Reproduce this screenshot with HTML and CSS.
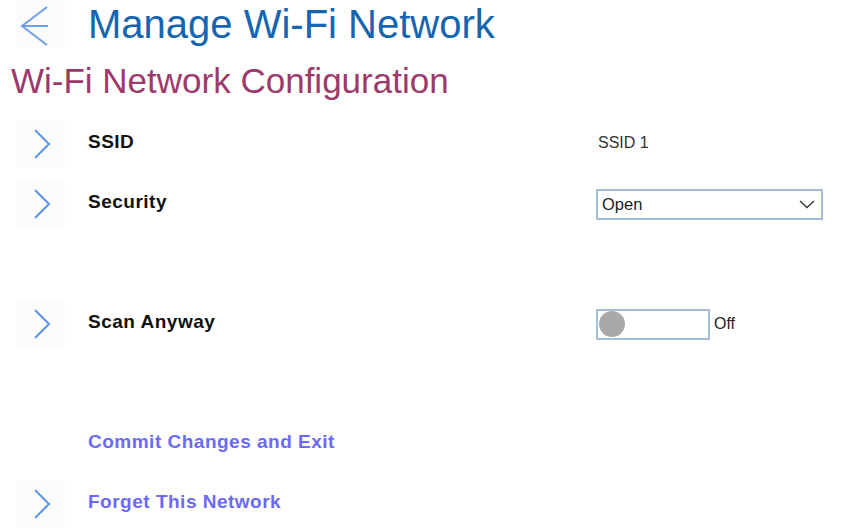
FILE: index.html
```html
<!DOCTYPE html>
<html>
<head>
<meta charset="utf-8">
<link rel="stylesheet" href="styles.css">
</head>
<body>
<header class="header">
  <div class="iconbox">
    <svg width="48" height="48" viewBox="0 0 48 48"><path d="M30 7 L5 26 L30 45 M5 26 H31" fill="none" stroke="#6f9fe6" stroke-width="2"/></svg>
  </div>
  <h1 class="title">Manage Wi-Fi Network</h1>
</header>
<h2 class="subtitle">Wi-Fi Network Configuration</h2>
<div class="list">
  <div class="row">
    <div class="iconbox"><svg width="48" height="48" viewBox="0 0 48 48"><path d="M18 10 L32 24 L18 38" fill="none" stroke="#5e93ea" stroke-width="2"/></svg></div>
    <div class="label">SSID</div>
    <div class="value">SSID 1</div>
  </div>
  <div class="row">
    <div class="iconbox"><svg width="48" height="48" viewBox="0 0 48 48"><path d="M18 10 L32 24 L18 38" fill="none" stroke="#5e93ea" stroke-width="2"/></svg></div>
    <div class="label">Security</div>
    <div class="select"><span>Open</span><svg width="16" height="10" viewBox="0 0 16 10"><path d="M1 2 L8 8.5 L15 2" fill="none" stroke="#333" stroke-width="1.3"/></svg></div>
  </div>
  <div class="row"></div>
  <div class="row">
    <div class="iconbox"><svg width="48" height="48" viewBox="0 0 48 48"><path d="M18 10 L32 24 L18 38" fill="none" stroke="#5e93ea" stroke-width="2"/></svg></div>
    <div class="label">Scan Anyway</div>
    <div class="toggle-wrap"><div class="toggle"><div class="knob"></div></div><span class="toggle-text">Off</span></div>
  </div>
  <div class="row"></div>
  <div class="row">
    <div class="spacer"></div>
    <div class="label link">Commit Changes and Exit</div>
  </div>
  <div class="row">
    <div class="iconbox"><svg width="48" height="48" viewBox="0 0 48 48"><path d="M18 10 L32 24 L18 38" fill="none" stroke="#5e93ea" stroke-width="2"/></svg></div>
    <div class="label link">Forget This Network</div>
  </div>
</div>
</body>
</html>
```

FILE: styles.css
```css
html, body {
  margin: 0;
  padding: 0;
  background: #ffffff;
  font-family: "Liberation Sans", Arial, sans-serif;
}
.header {
  display: flex;
  align-items: center;
  height: 48px;
  padding-left: 17px;
}
.iconbox {
  width: 48px;
  height: 48px;
  background: #fcfcfc;
  flex: none;
}
.iconbox svg { display: block; }
.title {
  margin: 0 0 0 23px;
  font-size: 40px;
  font-weight: normal;
  color: #1565b0;
  line-height: 46px;
}
.subtitle {
  margin: 13px 0 0 11px;
  font-size: 35px;
  font-weight: normal;
  color: #9c3a6b;
  line-height: 39px;
}
.list {
  margin-top: 14px;
  padding-left: 17px;
}
.row {
  display: flex;
  align-items: center;
  height: 60px;
}
.spacer {
  width: 48px;
  flex: none;
}
.label {
  margin-left: 23px;
  width: 508px;
  flex: none;
  font-size: 19px;
  font-weight: bold;
  letter-spacing: 0.5px;
  color: #111;
  padding-bottom: 5px;
}
.label.link {
  color: #6a6af7;
  width: auto;
}
.value {
  font-size: 16px;
  color: #333;
  padding-left: 2px;
  padding-bottom: 3px;
}
.select {
  box-sizing: border-box;
  width: 227px;
  height: 31px;
  border: 2px solid #a4bdd8;
  display: flex;
  align-items: center;
  justify-content: space-between;
  padding: 0 6px 0 4px;
  font-size: 16.5px;
  color: #222;
}
.toggle-wrap {
  display: flex;
  align-items: center;
}
.toggle {
  box-sizing: border-box;
  width: 114px;
  height: 31px;
  border: 2px solid #a4bdd8;
  display: flex;
  align-items: center;
  padding-left: 1px;
}
.knob {
  width: 26px;
  height: 26px;
  border-radius: 50%;
  background: #a9a9a9;
}
.toggle-text {
  margin-left: 4px;
  font-size: 16px;
  color: #222;
}
```
